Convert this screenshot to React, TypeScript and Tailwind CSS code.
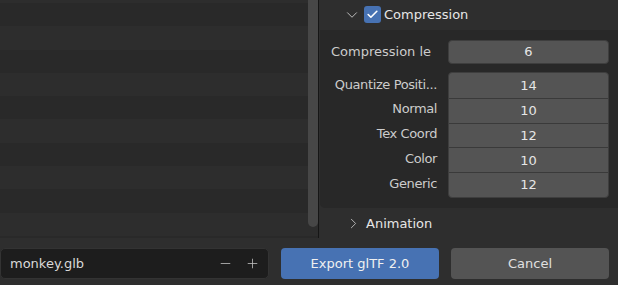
import { ChevronDown, ChevronRight, Check, Minus, Plus } from "lucide-react";

const rows = Array.from({ length: 11 });

const quantize = [
  { label: "Quantize Positi...", value: "14" },
  { label: "Normal", value: "10" },
  { label: "Tex Coord", value: "12" },
  { label: "Color", value: "10" },
  { label: "Generic", value: "12" },
];

export default function App() {
  return (
    <div className="w-[618px] h-[285px] bg-[#2e2e2e] flex flex-col overflow-hidden text-[13px] text-[#d9d9d9] font-['DejaVu_Sans',sans-serif]">
      <div className="flex h-[238px]">
        {/* file list */}
        <div className="relative w-[318px] flex flex-col overflow-hidden">
          <div className="h-[3px] shrink-0 bg-[#2d2d2d]" />
          {rows.map((_, i) => (
            <div
              key={i}
              className={`h-[23.3px] shrink-0 ${i % 2 === 0 ? "bg-[#292929]" : "bg-[#2d2d2d]"}`}
            />
          ))}
          <div className="absolute right-0 top-[-8px] w-[10px] h-[235px] rounded-full bg-[#474747]" />
        </div>
        <div className="w-px bg-[#161616]" />

        {/* operator panel */}
        <div className="flex-1 flex flex-col">
          <div className="h-[31px] flex items-center pl-[24px] gap-[3px]">
            <ChevronDown size={18} strokeWidth={1.3} className="text-[#bdbdbd]" />
            <div className="w-[17px] h-[17px] rounded-[3px] bg-[#4772b3] flex items-center justify-center">
              <Check size={13} strokeWidth={3} className="text-white" />
            </div>
            <span className="text-[#e6e6e6]">Compression</span>
          </div>

          <div className="ml-px bg-[#282828] rounded-bl-[5px] pt-[10px] pb-[10px] pr-[9px] flex flex-col gap-[8px]">
            <div className="flex items-center h-[24px]">
              <span className="w-[117px] pl-[11px] whitespace-nowrap overflow-hidden text-[#cccccc]">Compression le</span>
              <div className="ml-[11px] flex-1 h-[24px] rounded-[4px] bg-[#545454] border border-[#3e3e3e] flex items-center justify-center text-[#e6e6e6]">
                6
              </div>
            </div>
            <div className="flex">
              <div className="w-[117px] flex flex-col items-end">
                {quantize.map((q) => (
                  <div key={q.label} className="h-[24.8px] flex items-center whitespace-nowrap text-[#cccccc] tracking-[-0.03em]">
                    {q.label}
                  </div>
                ))}
              </div>
              <div className="ml-[11px] flex-1 rounded-[4px] bg-[#545454] border border-[#3e3e3e] flex flex-col overflow-hidden">
                {quantize.map((q, i) => (
                  <div
                    key={q.label}
                    className={`h-[24.8px] flex items-center justify-center text-[#e6e6e6] ${i > 0 ? "border-t border-[#3a3a3a]" : ""}`}
                  >
                    {q.value}
                  </div>
                ))}
              </div>
            </div>
          </div>

          <div className="h-[31px] flex items-center pl-[26px] gap-[4px] pt-[2px]">
            <ChevronRight size={17} strokeWidth={1.3} className="text-[#bdbdbd]" />
            <span className="text-[#e6e6e6]">Animation</span>
          </div>
        </div>
      </div>

      {/* bottom bar */}
      <div className="flex items-start pt-[10px] pr-[9px]">
        <div className="w-[269px] h-[31px] rounded-[5px] bg-[#1d1d1d] border border-[#333333] flex items-center pl-[9px] pr-[8px]">
          <span className="flex-1 text-[#d9d9d9]">monkey.glb</span>
          <Minus size={15} strokeWidth={1.3} className="text-[#bdbdbd] mr-[12px]" />
          <Plus size={15} strokeWidth={1.3} className="text-[#bdbdbd]" />
        </div>
        <button className="ml-[12px] w-[158px] h-[31px] rounded-[4px] bg-[#4772b3] text-[#f0f0f0]">
          Export glTF 2.0
        </button>
        <button className="ml-[12px] w-[158px] h-[31px] rounded-[4px] bg-[#545454] text-[#e0e0e0]">
          Cancel
        </button>
      </div>
    </div>
  );
}
